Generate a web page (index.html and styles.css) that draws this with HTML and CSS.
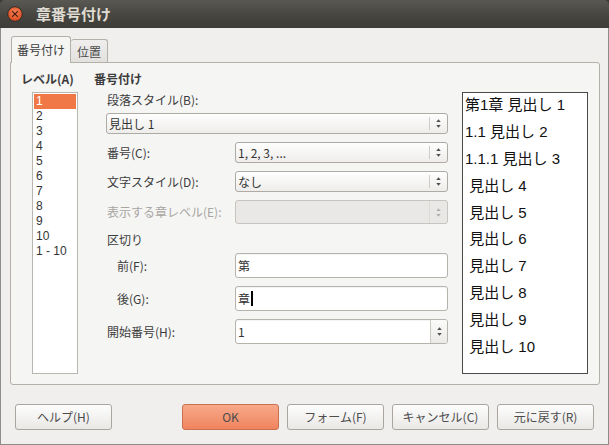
FILE: index.html
```html
<!DOCTYPE html>
<html lang="ja">
<head>
<meta charset="utf-8">
<title>章番号付け</title>
<link rel="stylesheet" href="styles.css">
</head>
<body>
<div class="window">
  <div class="titlebar">
    <svg class="close" width="16" height="16" viewBox="0 0 16 16">
      <defs>
        <radialGradient id="cg" cx="50%" cy="40%" r="60%">
          <stop offset="0" stop-color="#f8875c"/>
          <stop offset="1" stop-color="#d9461c"/>
        </radialGradient>
      </defs>
      <circle cx="8" cy="8" r="7.3" fill="url(#cg)" stroke="#2f2e2b" stroke-width="1"/>
      <path d="M5.6 5.6L10.4 10.4M10.4 5.6L5.6 10.4" stroke="#4a1a0c" stroke-width="1.3" stroke-linecap="round"/>
    </svg>
    <span class="title">章番号付け</span>
  </div>
  <div class="body">
    <div class="tabs">
      <div class="tab active">番号付け</div>
      <div class="tab inactive">位置</div>
    </div>
    <div class="panel">
      <div class="levelcol">
        <div class="heading">レベル(A)</div>
        <div class="levellist">
          <div class="sel">1</div>
          <div>2</div>
          <div>3</div>
          <div>4</div>
          <div>5</div>
          <div>6</div>
          <div>7</div>
          <div>8</div>
          <div>9</div>
          <div>10</div>
          <div>1 - 10</div>
        </div>
      </div>
      <div class="formcol">
        <div class="heading">番号付け</div>
        <div class="lbl-line">段落スタイル(B):</div>
        <div class="combo wide">
          <span class="val">見出し 1</span>
          <span class="arrows"><svg width="7" height="13" viewBox="0 0 7 13"><path d="M1.2 5L3.5 2.3L5.8 5Z M1.2 8L3.5 10.7L5.8 8Z" fill="#505050"/></svg></span>
        </div>
        <div class="row r-combo">
          <span class="lbl">番号(C):</span>
          <div class="combo field">
            <span class="val">1, 2, 3, ...</span>
            <span class="arrows"><svg width="7" height="13" viewBox="0 0 7 13"><path d="M1.2 5L3.5 2.3L5.8 5Z M1.2 8L3.5 10.7L5.8 8Z" fill="#505050"/></svg></span>
          </div>
        </div>
        <div class="row r-combo">
          <span class="lbl">文字スタイル(D):</span>
          <div class="combo field">
            <span class="val">なし</span>
            <span class="arrows"><svg width="7" height="13" viewBox="0 0 7 13"><path d="M1.2 5L3.5 2.3L5.8 5Z M1.2 8L3.5 10.7L5.8 8Z" fill="#505050"/></svg></span>
          </div>
        </div>
        <div class="row r-disabled">
          <span class="lbl dim">表示する章レベル(E):</span>
          <div class="combo field disabled">
            <span class="val"></span>
            <span class="arrows"><svg width="7" height="13" viewBox="0 0 7 13"><path d="M1.2 5L3.5 2.3L5.8 5Z M1.2 8L3.5 10.7L5.8 8Z" fill="#b0b0b0"/></svg></span>
          </div>
        </div>
        <div class="lbl-line sep">区切り</div>
        <div class="row r-entry first">
          <span class="lbl deep">前(F):</span>
          <div class="entry field"><span>第</span></div>
        </div>
        <div class="row r-entry">
          <span class="lbl deep">後(G):</span>
          <div class="entry field"><span>章</span><span class="caret"></span></div>
        </div>
        <div class="row r-entry">
          <span class="lbl">開始番号(H):</span>
          <div class="entry field spin">
            <span class="val">1</span>
            <span class="spinbtn"><svg width="7" height="13" viewBox="0 0 7 13"><path d="M1.2 5L3.5 2.3L5.8 5Z M1.2 8L3.5 10.7L5.8 8Z" fill="#505050"/></svg></span>
          </div>
        </div>
      </div>
      <div class="preview">
        <div>第1章 見出し 1</div>
        <div>1.1 見出し 2</div>
        <div>1.1.1 見出し 3</div>
        <div> 見出し 4</div>
        <div> 見出し 5</div>
        <div> 見出し 6</div>
        <div> 見出し 7</div>
        <div> 見出し 8</div>
        <div> 見出し 9</div>
        <div> 見出し 10</div>
      </div>
    </div>
    <div class="buttons">
      <div class="btn">ヘルプ(H)</div>
      <div class="right">
        <div class="btn ok">OK</div>
        <div class="btn">フォーム(F)</div>
        <div class="btn">キャンセル(C)</div>
        <div class="btn">元に戻す(R)</div>
      </div>
    </div>
  </div>
</div>
</body>
</html>
```

FILE: styles.css
```css
* { box-sizing: border-box; }
html, body { margin: 0; padding: 0; }
body {
  width: 609px;
  height: 445px;
  overflow: hidden;
  background: #3c3b37;
  font-family: "Noto Sans CJK JP", "Noto Sans", sans-serif;
  font-size: 12px;
  color: #3c3c3c;
}
.window {
  width: 609px;
  height: 445px;
  display: flex;
  flex-direction: column;
}
.titlebar {
  height: 28px;
  flex: none;
  background: linear-gradient(#5a5852, #47453f 55%, #3d3c38);
  border-radius: 5px 5px 0 0;
  display: flex;
  align-items: center;
  padding-left: 7px;
}
.close { display: block; }
.title {
  margin-left: 13px;
  color: #dfdbd2;
  font-weight: bold;
  font-size: 15px;
  line-height: 18px;
}
.body {
  flex: 1;
  background: #f0efee;
  border: 1px solid #8e8c88;
  border-top: none;
  padding: 8px 9px 0 9px;
}
.tabs {
  display: flex;
  align-items: flex-end;
  height: 26px;
  padding-left: 1px;
  position: relative;
  z-index: 1;
}
.tab {
  border: 1px solid #b3b0aa;
  border-bottom: none;
  border-radius: 3px 3px 0 0;
  display: flex;
  align-items: center;
  justify-content: center;
  color: #3c3c3c;
}
.tab.active {
  width: 60px;
  height: 27px;
  margin-bottom: -1px;
  background: #f5f5f4;
  padding-bottom: 1px;
}
.tab.inactive {
  width: 37px;
  height: 23px;
  background: linear-gradient(#efeeed, #e2e1de);
  border-left: none;
  color: #4a4a4a;
}
.panel {
  width: 590px;
  height: 323px;
  border: 1px solid #b3b0aa;
  border-radius: 0 3px 3px 3px;
  background: #f5f5f4;
  display: flex;
  padding: 9px 10px 10px 9px;
}
.heading {
  font-weight: bold;
  line-height: 14px;
  height: 14px;
  color: #3c3c3c;
}
.levelcol {
  width: 73px;
  flex: none;
  display: flex;
  flex-direction: column;
}
.levelcol .heading { padding-left: 1px; }
.levellist {
  margin: 6px 0 0 12px;
  width: 46px;
  height: 282px;
  border: 1px solid #b9b6b1;
  background: #fff;
  padding: 1px 1px;
  font-family: "Liberation Sans", "Noto Sans CJK JP", sans-serif;
}
.levellist div {
  line-height: 15px;
  height: 15px;
  padding-left: 2px;
  color: #333;
}
.levellist .sel { background: #f07746; color: #fff; }

.formcol {
  width: 355px;
  flex: none;
  display: flex;
  flex-direction: column;
}
.formcol .heading { padding-left: 1px; }
.lbl-line {
  margin-top: 7px;
  height: 14px;
  line-height: 14px;
  padding-left: 14px;
}
.lbl-line.sep { margin-top: 9px; }
.combo {
  height: 21px;
  border: 1px solid #aeaaa4;
  border-radius: 3px;
  background: linear-gradient(#fefefe, #eeedeb);
  display: flex;
  align-items: center;
}
.combo.wide {
  margin: 6px 0 0 13px;
  width: 342px;
}
.combo .val {
  flex: 1;
  padding-left: 2px;
  line-height: 14px;
  color: #333;
}
.arrows {
  width: 18px;
  height: 13px;
  border-left: 1px solid #cfccc7;
  display: flex;
  align-items: center;
  justify-content: center;
}
.arrows svg, .spinbtn svg { display: block; }
.row {
  display: flex;
  align-items: center;
  margin-top: 8px;
}
.row.r-combo { height: 21px; }
.row.r-disabled { height: 24px; }
.row.r-entry { height: 25px; }
.row.r-entry.first { margin-top: 6px; }
.lbl {
  width: 142px;
  flex: none;
  padding-left: 14px;
  line-height: 14px;
}
.lbl.deep { padding-left: 24px; }
.lbl.dim { color: #a8a6a3; }
.field {
  width: 213px;
  height: 100%;
}
.combo.disabled {
  background: #e9e8e6;
  border-color: #c8c5c0;
}
.combo.disabled .arrows {
  height: 100%;
  border-left-color: #dcdad6;
}
.entry {
  border: 1px solid #b6b2ac;
  border-radius: 3px;
  background: #fff;
  display: flex;
  align-items: center;
  padding-left: 2px;
  box-shadow: inset 0 1px 1px rgba(0, 0, 0, 0.05);
  color: #333;
  line-height: 14px;
}
.caret {
  width: 2px;
  height: 15px;
  background: #000;
  margin-left: 1px;
}
.entry.spin { padding-right: 0; }
.entry.spin .val { flex: 1; }
.spinbtn {
  width: 17px;
  height: 100%;
  border-left: 1px solid #cbc8c3;
  border-radius: 0 2px 2px 0;
  background: linear-gradient(#fbfbfa, #ebeae8);
  display: flex;
  align-items: center;
  justify-content: center;
}
.preview {
  margin: 20px 0 0 14px;
  width: 126px;
  height: 282px;
  flex: none;
  border: 1px solid #4a4a4a;
  background: #fff;
  padding: 0 2px;
  font-family: "Liberation Sans", "Noto Sans CJK JP", sans-serif;
  font-size: 15px;
  color: #111;
}
.preview div {
  line-height: 26.9px;
  height: 26.9px;
  white-space: pre;
}
.preview div:first-child { margin-top: -1px; }
.buttons {
  display: flex;
  justify-content: space-between;
  margin: 19px 5px 0 5px;
}
.right {
  display: flex;
  gap: 8px;
}
.btn {
  width: 97px;
  height: 26px;
  border: 1px solid #aaa69f;
  border-radius: 3px;
  background: linear-gradient(#fdfdfd, #e9e8e6);
  display: flex;
  align-items: center;
  justify-content: center;
  color: #4c4c4c;
  line-height: 14px;
}
.btn.ok {
  background: linear-gradient(#f7a98a, #f0845e);
  border-color: #c9714f;
}
```
